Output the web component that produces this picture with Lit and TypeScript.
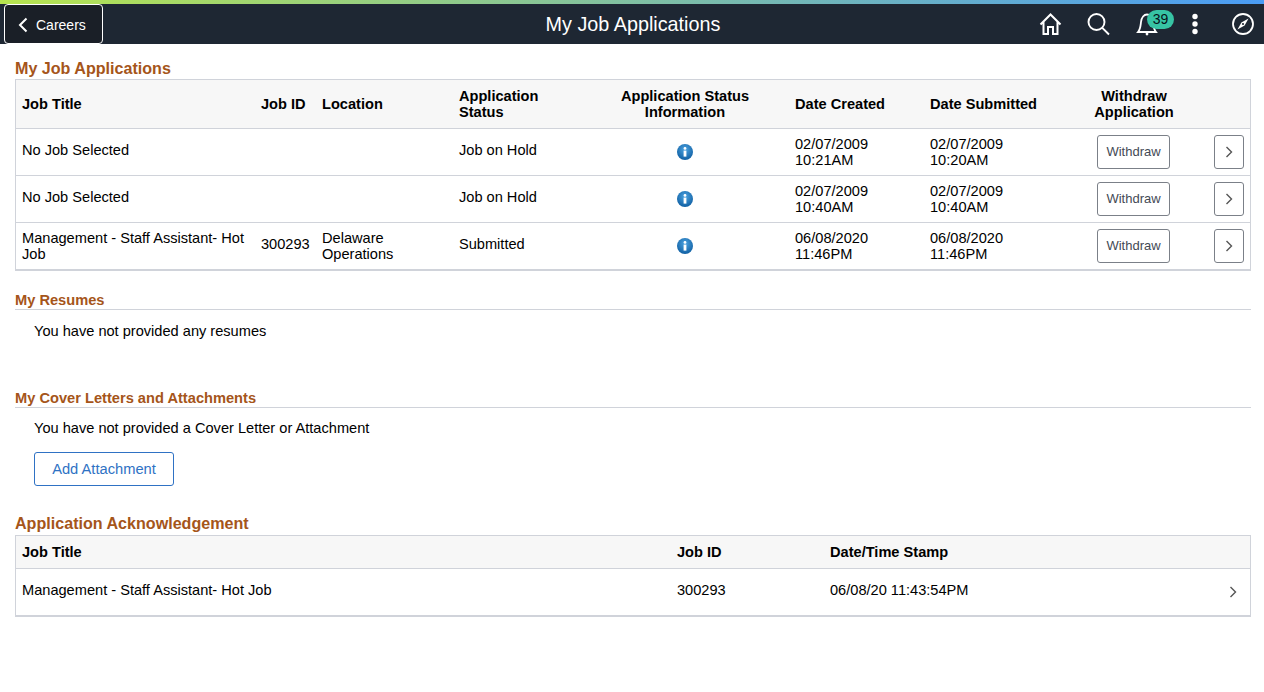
import { LitElement, html, css, svg } from 'lit';
import { customElement } from 'lit/decorators.js';

const APPS = [
  { title: 'No Job Selected', id: '', loc: '', status: 'Job on Hold', created: ['02/07/2009', '10:21AM'], submitted: ['02/07/2009', '10:20AM'] },
  { title: 'No Job Selected', id: '', loc: '', status: 'Job on Hold', created: ['02/07/2009', '10:40AM'], submitted: ['02/07/2009', '10:40AM'] },
  { title: 'Management - Staff Assistant- Hot Job', id: '300293', loc: 'Delaware Operations', status: 'Submitted', created: ['06/08/2020', '11:46PM'], submitted: ['06/08/2020', '11:46PM'] },
];

const infoIcon = svg`
  <svg width="18" height="18" viewBox="0 0 18 18">
    <defs>
      <radialGradient id="ib" cx="50%" cy="35%" r="65%">
        <stop offset="0" stop-color="#4da3e0"/>
        <stop offset="1" stop-color="#0f5fa3"/>
      </radialGradient>
    </defs>
    <circle cx="9" cy="9" r="8" fill="url(#ib)"/>
    <circle cx="9" cy="5.4" r="1.4" fill="#fff"/>
    <rect x="7.6" y="7.6" width="2.8" height="6" fill="#fff"/>
  </svg>`;

const chevron = svg`
  <svg width="8" height="12" viewBox="0 0 8 12">
    <path d="M1.5 1 L6.5 6 L1.5 11" fill="none" stroke="#555" stroke-width="1.4"/>
  </svg>`;

@customElement('app-root')
export class AppRoot extends LitElement {
  static styles = css`
    :host {
      display: block;
      font-family: "Liberation Sans", Arial, sans-serif;
      font-size: 14.6px;
      line-height: 16px;
      color: #000;
      background: #fff;
      min-height: 692px;
    }
    .accent {
      height: 4px;
      background: linear-gradient(90deg, #b7e44f 0%, #4a9cf5 100%);
    }
    .banner {
      height: 40px;
      background: #1e2733;
      display: grid;
      grid-template-columns: 1fr auto 1fr;
      align-items: center;
      color: #fff;
    }
    .back {
      justify-self: start;
      margin-left: 4px;
      width: 99px;
      height: 40px;
      box-sizing: border-box;
      border: 1px solid #fff;
      border-radius: 4px;
      background: #1a1f27;
      color: #fff;
      font-size: 14px;
      display: flex;
      align-items: center;
      gap: 8px;
      padding: 1px 0 0 13px;
    }
    .title { font-size: 19.8px; line-height: 24px; padding-left: 2px; }
    .tools {
      justify-self: end;
      display: flex;
      align-items: center;
    }
    .tool {
      width: 48px;
      height: 40px;
      display: flex;
      align-items: center;
      justify-content: center;
      position: relative;
    }
    .tool:last-child { width: 42px; margin-left: 3px; }
    .badge {
      position: absolute;
      left: 24px;
      top: 6px;
      width: 27px;
      height: 19px;
      border-radius: 10px;
      background: #37c4a4;
      color: #06121a;
      font-size: 14px;
      line-height: 19px;
      text-align: center;
    }
    main { padding: 0 13px 0 15px; }
    h2 {
      margin: 0 0 1px;
      color: #a5551a;
      font-size: 16.1px;
      line-height: 20px;
      font-weight: bold;
    }
    .sub {
      font-size: 14.65px;
      line-height: 18px;
      border-bottom: 1px solid #d0d3da;
      height: 18px;
      margin: 0;
    }
    .grid {
      border: 1px solid #d0d3da;
      border-bottom-width: 2px;
    }
    .row {
      display: grid;
      align-items: center;
      border-top: 1px solid #d0d3da;
    }
    .row.head {
      border-top: 0;
      background: #f7f7f7;
      font-weight: bold;
    }
    .apps .row { grid-template-columns: 239px 61px 137px 128px 208px 135px 136px 148px 42px; height: 46px; }
    .apps .row.head { height: 48px; }
    .ack .row { grid-template-columns: 655px 153px 1fr 21px; height: 46px; }
    .ack .row.head { height: 32px; }
    .cell { padding: 0 6px; }
    .single { padding-bottom: 4px; }
    .center { text-align: center; }
    .icon-cell { display: flex; justify-content: center; padding-bottom: 1px; }
    button {
      font: inherit;
      background: #fff;
      border: 1px solid #7b8088;
      border-radius: 3px;
      padding: 0;
      box-sizing: border-box;
    }
    .withdraw {
      display: block;
      margin: 0 0 0 37px;
      width: 73px;
      height: 34px;
      font-size: 13px;
      color: #444a55;
    }
    .go {
      width: 30px;
      height: 34px;
      display: flex;
      align-items: center;
      justify-content: center;
    }
    .msg { padding: 13px 0 0 19px; }
    .s4 .msg { padding-top: 12px; }
    .add {
      display: block;
      margin: 16px 0 0 19px;
      width: 140px;
      height: 34px;
      border-color: #2f72c4;
      color: #2f72c4;
      font-size: 14.7px;
    }
    .s1 { padding-top: 14px; }
    .s2 { padding-top: 20px; }
    .s3 { height: 98px; }
    .s4 { height: 124px; }
    .ack-title { margin-bottom: 2px; }
    .plain { display: flex; }
  `;

  render() {
    return html`
      <div class="accent"></div>
      <header class="banner">
        <button class="back">
          <svg width="10" height="16" viewBox="0 0 10 16"><path d="M8.5 1.5 L2 8 L8.5 14.5" fill="none" stroke="#fff" stroke-width="2"/></svg>
          <span>Careers</span>
        </button>
        <div class="title">My Job Applications</div>
        <div class="tools">
          <div class="tool">
            <svg width="24" height="24" viewBox="0 0 24 24" fill="none" stroke="#fff" stroke-width="2">
              <path d="M1.5 12.5 L11.5 2.5 L21.5 12.5 M4.5 10 V22 H9 V15 H14 V22 H18.5 V10"/>
            </svg>
          </div>
          <div class="tool">
            <svg width="24" height="24" viewBox="0 0 24 24" fill="none" stroke="#fff" stroke-width="1.9">
              <circle cx="9.5" cy="10" r="8"/><path d="M15.3 15.8 L22 22.5"/>
            </svg>
          </div>
          <div class="tool">
            <svg width="24" height="24" viewBox="0 0 24 24" fill="none" stroke="#fff" stroke-width="1.8">
              <path d="M3 20 C5.5 17 5.5 14 6 10 C6.5 5.5 9 2.5 12 2.5 C15 2.5 17.5 5.5 18 10 C18.5 14 18.5 17 21 20 Z"/>
              <circle cx="12" cy="22" r="1.4" fill="#fff" stroke="none"/>
            </svg>
            <span class="badge">39</span>
          </div>
          <div class="tool">
            <svg width="8" height="22" viewBox="0 0 8 22" fill="#fff">
              <circle cx="4" cy="3.5" r="2.7"/><circle cx="4" cy="11" r="2.7"/><circle cx="4" cy="18.5" r="2.7"/>
            </svg>
          </div>
          <div class="tool">
            <svg width="24" height="24" viewBox="0 0 24 24" fill="none" stroke="#fff" stroke-width="1.8">
              <circle cx="12" cy="12" r="10"/>
              <path d="M17.5 6.5 L13.6 13.6 L6.5 17.5 L10.4 10.4 Z" fill="#fff" stroke="none"/>
              <circle cx="12" cy="12" r="1.1" fill="#1e2733" stroke="none"/>
            </svg>
          </div>
        </div>
      </header>
      <main>
        <section class="s1">
          <h2>My Job Applications</h2>
          <div class="grid apps">
            <div class="row head">
              <div class="cell">Job Title</div>
              <div class="cell">Job ID</div>
              <div class="cell">Location</div>
              <div class="cell">Application Status</div>
              <div class="cell center">Application Status Information</div>
              <div class="cell">Date Created</div>
              <div class="cell">Date Submitted</div>
              <div class="cell center">Withdraw Application</div>
              <div></div>
            </div>
            ${APPS.map((a) => html`
              <div class="row">
                <div class="cell ${a.id ? '' : 'single'}">${a.title}</div>
                <div class="cell single">${a.id}</div>
                <div class="cell">${a.loc}</div>
                <div class="cell single">${a.status}</div>
                <div class="icon-cell">${infoIcon}</div>
                <div class="cell">${a.created[0]}<br />${a.created[1]}</div>
                <div class="cell">${a.submitted[0]}<br />${a.submitted[1]}</div>
                <div><button class="withdraw">Withdraw</button></div>
                <div class="cell"><button class="go">${chevron}</button></div>
              </div>
            `)}
          </div>
        </section>
        <section class="s2 s3">
          <h2 class="sub">My Resumes</h2>
          <div class="msg">You have not provided any resumes</div>
        </section>
        <section class="s4">
          <h2 class="sub">My Cover Letters and Attachments</h2>
          <div class="msg">You have not provided a Cover Letter or Attachment</div>
          <button class="add">Add Attachment</button>
        </section>
        <section>
          <h2 class="ack-title">Application Acknowledgement</h2>
          <div class="grid ack">
            <div class="row head">
              <div class="cell">Job Title</div>
              <div class="cell">Job ID</div>
              <div class="cell">Date/Time Stamp</div>
              <div></div>
            </div>
            <div class="row">
              <div class="cell single">Management - Staff Assistant- Hot Job</div>
              <div class="cell single">300293</div>
              <div class="cell single">06/08/20 11:43:54PM</div>
              <div class="plain">${chevron}</div>
            </div>
          </div>
        </section>
      </main>
    `;
  }
}
